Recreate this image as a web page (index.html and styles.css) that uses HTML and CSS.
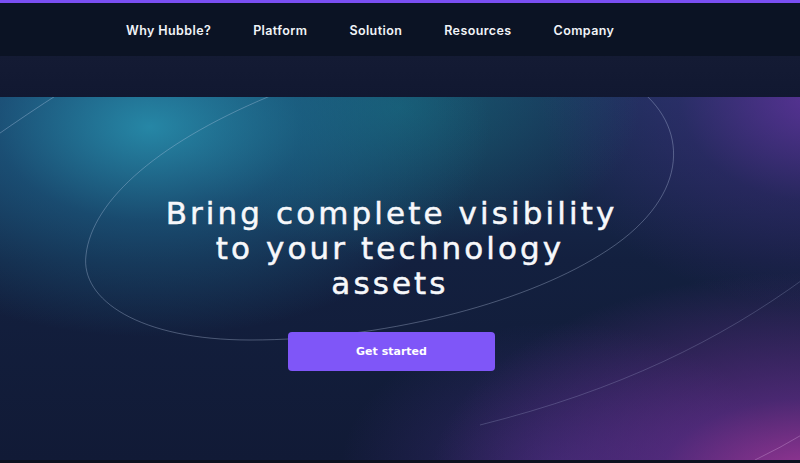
FILE: index.html
```html
<!DOCTYPE html>
<html lang="en">
<head>
<meta charset="utf-8">
<title>Hubble</title>
<link rel="stylesheet" href="styles.css">
</head>
<body>
<div class="topline"></div>
<header class="header">
  <nav class="nav">
    <a class="nav-item" href="#">Why Hubble?</a>
    <a class="nav-item" href="#">Platform</a>
    <a class="nav-item" href="#">Solution</a>
    <a class="nav-item" href="#">Resources</a>
    <a class="nav-item" href="#">Company</a>
  </nav>
</header>
<div class="subband"></div>
<section class="hero">
  <svg class="orbits" width="800" height="363" viewBox="0 97 800 363" aria-hidden="true">
    <path d="M 640 90 C 690 130, 690 200, 600 255 C 520 305, 380 340, 250 340 C 140 340, 80 300, 86 255 C 92 200, 160 140, 280 92" fill="none" stroke="rgba(190,205,235,0.33)" stroke-width="1"/>
    <path d="M -10 140 Q 30 112 60 93" fill="none" stroke="rgba(190,205,235,0.35)" stroke-width="1"/>
    <path d="M 805 278 C 720 340, 620 390, 480 425" fill="none" stroke="rgba(190,205,235,0.22)" stroke-width="1"/>
    <path d="M 805 433 Q 780 448 755 460" fill="none" stroke="rgba(230,190,235,0.3)" stroke-width="1"/>
  </svg>
  <div class="hero-content">
    <h1 class="title">Bring complete visibility<br>to your technology<br>assets</h1>
    <a class="cta" href="#">Get started</a>
  </div>
</section>
<div class="bottomline"></div>
</body>
</html>
```
FILE: styles.css
```css
* { box-sizing: border-box; }
html, body { margin: 0; padding: 0; }
body {
  width: 800px;
  height: 463px;
  overflow: hidden;
  background: #0b1222;
  font-family: Inter, "Noto Sans", sans-serif;
  color: #fff;
}
.topline {
  height: 3px;
  background: #7a4ff2;
}
.header {
  height: 53px;
  background: #0b1324;
  display: flex;
  align-items: center;
}
.nav {
  display: flex;
  gap: 42px;
  padding-left: 126px;
  padding-top: 1px;
}
.nav-item {
  color: #f1f3f8;
  text-decoration: none;
  font-size: 12.5px;
  font-weight: 600;
  letter-spacing: 0.4px;
}
.subband {
  height: 41px;
  background: linear-gradient(180deg, #141b34 0%, #111831 100%);
}
.hero {
  position: relative;
  height: 363px;
  overflow: hidden;
  background:
    radial-gradient(ellipse 340px 210px at 150px 30px, rgba(40,150,180,0.85) 0%, rgba(30,120,160,0.45) 45%, rgba(20,60,110,0) 100%),
    radial-gradient(ellipse 240px 150px at 400px 10px, rgba(20,120,130,0.55) 0%, rgba(20,80,100,0) 100%),
    radial-gradient(ellipse 280px 210px at 820px 0px, rgba(110,50,170,0.75) 0%, rgba(70,40,130,0.35) 50%, rgba(40,30,90,0) 100%),
    radial-gradient(ellipse 380px 210px at 810px 385px, rgba(185,60,170,0.85) 0%, rgba(120,50,160,0.55) 40%, rgba(60,40,120,0) 100%),
    radial-gradient(ellipse 220px 150px at 560px 375px, rgba(80,50,150,0.45) 0%, rgba(60,40,120,0) 100%),
    linear-gradient(180deg, #1a3258 0%, #13203f 45%, #111a36 100%);
}
.orbits {
  position: absolute;
  left: 0;
  top: 0;
  pointer-events: none;
}
.hero-content {
  position: relative;
  display: flex;
  flex-direction: column;
  align-items: center;
  padding-top: 99px;
  padding-right: 20px;
}
.title {
  margin: 0;
  font-family: "DejaVu Sans", Inter, sans-serif;
  font-size: 31px;
  line-height: 35px;
  font-weight: 400;
  text-align: center;
  letter-spacing: 3.1px;
  text-indent: 3px;
  color: #f7f8fb;
  -webkit-text-stroke: 0.5px #f7f8fb;
}
.cta {
  margin-top: 31px;
  width: 207px;
  height: 39px;
  border-radius: 4px;
  background: #7f56f8;
  color: #fff;
  text-decoration: none;
  font-family: "DejaVu Sans", Inter, sans-serif;
  font-size: 11px;
  font-weight: 700;
  display: flex;
  align-items: center;
  justify-content: center;
  margin-left: 3px;
}
.bottomline {
  height: 3px;
  background: #0c1220;
}
```
